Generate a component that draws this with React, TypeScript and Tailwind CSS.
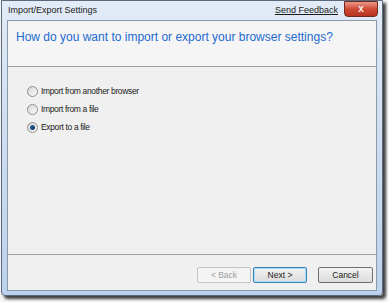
import React, { useState } from "react";

const options = [
  "Import from another browser",
  "Import from a file",
  "Export to a file",
];

function Radio({ checked }: { checked: boolean }) {
  return (
    <span className="relative flex h-[11px] w-[11px] items-center justify-center rounded-full border border-[#8e8f8f] bg-gradient-to-br from-[#d6d6d6] to-[#fbfbfb]">
      {checked ? (
        <span className="h-[5px] w-[5px] rounded-full bg-gradient-to-br from-[#2f6fb0] to-[#0d2a52]" />
      ) : null}
    </span>
  );
}

export default function App() {
  const [selected, setSelected] = useState(2);

  return (
    <div
      className="h-[302px] w-[388px] overflow-hidden bg-[#f4f4f4]"
      style={{ fontFamily: '"Liberation Sans", Arial, sans-serif' }}
    >
      <div className="ml-[1px] flex h-[296px] w-[382px] flex-col rounded-b-[4px] border border-[#5a6a7c] bg-gradient-to-b from-[#e2ebf6] via-[#cddcef] to-[#bcd2ec] shadow-[3px_3px_3px_rgba(0,0,0,0.75)]">
        {/* title bar */}
        <div className="flex h-[19px] items-center pl-[6px]">
          <span className="text-[9px] text-[#1b1b1b]">Import/Export Settings</span>
          <span className="ml-auto mr-[6px] text-[9px] text-[#1b1b1b] underline">
            Send Feedback
          </span>
          <div className="mr-[4px] flex h-[16px] w-[34px] -translate-y-[2px] items-center justify-center rounded-b-[4px] border border-[#6e2a22] bg-gradient-to-b from-[#e8988a] via-[#cf4a34] to-[#b8321e]">
            <span className="text-[10px] font-bold text-[#f0f0f0]">x</span>
          </div>
        </div>

        {/* client area */}
        <div className="mx-[5px] flex flex-1 flex-col border border-[#8b9aab] bg-[#f0f0f0]">
          <div className="flex h-[45px] items-start bg-[#f5f5f5] pl-[8px] pt-[7px]">
            <span className="text-[12px] text-[#1d6ace]">
              How do you want to import or export your browser settings?
            </span>
          </div>
          <div className="h-px bg-[#a0a0a0]" />
          <div className="flex flex-1 flex-col gap-[7px] pl-[19px] pt-[19px]">
            {options.map((label, i) => (
              <label
                key={label}
                className="flex h-[11px] cursor-pointer items-center gap-[3px]"
                onClick={() => setSelected(i)}
              >
                <Radio checked={selected === i} />
                <span className="text-[8.5px] tracking-[-0.35px] text-[#1b1b1b]">{label}</span>
              </label>
            ))}
          </div>
          <div className="h-px bg-[#a0a0a0]" />
          <div className="flex h-[35px] items-start justify-end gap-[2px] pr-[3px] pt-[12px]">
            <button
              type="button"
              disabled
              className="h-[16px] w-[54px] rounded-[2px] border border-[#c4c4c4] bg-[#f4f4f4] text-[8.5px] text-[#a0a0a0]"
            >
              &lt; Back
            </button>
            <button
              type="button"
              className="h-[16px] w-[54px] rounded-[2px] border border-[#3c7fb1] bg-gradient-to-b from-[#f2f2f2] to-[#dcdcdc] text-[8.5px] text-[#1b1b1b] shadow-[inset_0_0_0_1px_#a6dff8]"
            >
              Next &gt;
            </button>
            <button
              type="button"
              className="ml-[9px] h-[16px] w-[55px] rounded-[2px] border border-[#707070] bg-gradient-to-b from-[#f2f2f2] to-[#dcdcdc] text-[8.5px] text-[#1b1b1b]"
            >
              Cancel
            </button>
          </div>
        </div>
        <div className="h-[4px]" />
      </div>
    </div>
  );
}
